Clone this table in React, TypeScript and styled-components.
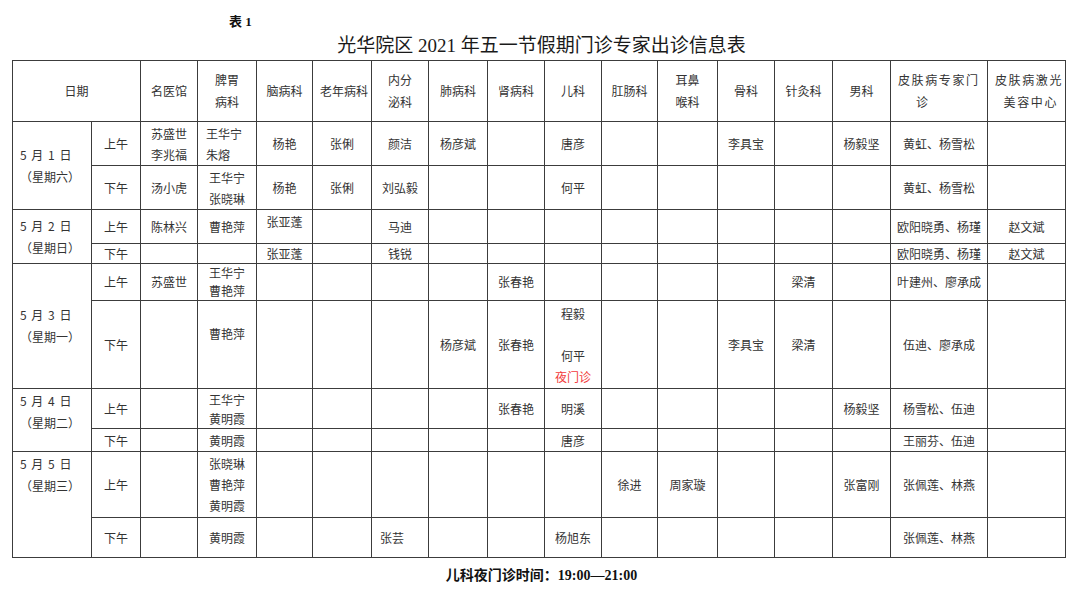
import React from 'react';
import styled, { createGlobalStyle } from 'styled-components';

const GlobalStyle = createGlobalStyle`
  html, body {
    margin: 0;
    padding: 0;
    background: #fff;
  }
  body {
    font-family: "Noto Sans CJK SC", "Noto Sans", sans-serif;
  }
`;

const Page = styled.div`
  width: 1080px;
  height: 589px;
  padding-top: 12px;
  box-sizing: border-box;
  overflow: hidden;
`;

const TableNo = styled.div`
  padding-left: 229px;
  font-family: "Liberation Serif", "Noto Sans CJK SC", serif;
  font-weight: bold;
  font-size: 13px;
  line-height: 20px;
  color: #111;
`;

const Title = styled.h1`
  margin: 0;
  text-align: center;
  font-family: "Liberation Serif", "Noto Sans CJK SC", serif;
  font-weight: normal;
  font-size: 19px;
  line-height: 28px;
  color: #1a1a1a;
  padding-left: 3px;
`;

const Table = styled.table`
  margin-left: 12px;
  width: 1053px;
  border-collapse: collapse;
  table-layout: fixed;
`;

const Row = styled.tr<{ $h: number }>`
  height: ${p => p.$h}px;
`;

const Cell = styled.td<{ $align?: string; $valign?: string; $pad?: number; $lh?: number }>`
  border: 1px solid #3c3c3c;
  padding: ${p => (p.$valign === 'top' ? '1px' : '0')} ${p => p.$pad ?? 4}px 0;
  font-size: 12px;
  line-height: ${p => p.$lh ?? 21}px;
  color: #333;
  white-space: nowrap;
  text-align: ${p => p.$align || 'center'};
  vertical-align: ${p => p.$valign || 'middle'};
`;

const HeadCell = styled.th<{ $align?: string; $spaced?: boolean }>`
  border: 1px solid #3c3c3c;
  padding: 0 7px;
  font-size: 12px;
  font-weight: normal;
  line-height: 22px;
  color: #333;
  white-space: nowrap;
  letter-spacing: ${p => (p.$spaced ? '1.6px' : '0')};
  text-align: ${p => p.$align || 'center'};
  vertical-align: middle;
`;

const DateCell = styled(Cell)`
  padding-left: 7px;
  line-height: 22px;
`;

const DateLine = styled.div`
  word-spacing: 2px;
`;

const Line = styled.div<{ $red?: boolean; $indent?: number }>`
  color: ${p => (p.$red ? '#f23b3b' : 'inherit')};
  padding-left: ${p => p.$indent ?? 0}px;
`;

const Footer = styled.div`
  margin-top: 8px;
  text-align: center;
  font-family: "Liberation Serif", "Noto Sans CJK SC", serif;
  font-weight: bold;
  font-size: 14px;
  line-height: 20px;
  color: #111;
  padding-left: 3px;
`;

type Align = 'left' | 'center' | 'right';
type VAlign = 'top' | 'middle';

interface Spec {
  lines: string[];
  align?: Align;
  valign?: VAlign;
  red?: number;
}

const c = (v: string | string[] = '', o: Partial<Spec> = {}): Spec => ({
  lines: Array.isArray(v) ? v : v ? [v] : [],
  ...o,
});

const widths = [79, 49, 57, 59, 56, 59, 57, 59, 57, 57, 56, 60, 57, 58, 58, 97, 78];

const heads: { lines: string[]; align?: Align; spaced?: boolean; indent?: number }[] = [
  { lines: ['名医馆'] },
  { lines: ['脾胃', '病科'] },
  { lines: ['脑病科'] },
  { lines: ['老年病科'] },
  { lines: ['内分', '泌科'] },
  { lines: ['肺病科'] },
  { lines: ['肾病科'] },
  { lines: ['儿科'] },
  { lines: ['肛肠科'] },
  { lines: ['耳鼻', '喉科'] },
  { lines: ['骨科'] },
  { lines: ['针灸科'] },
  { lines: ['男科'] },
  { lines: ['皮肤病专家门', '诊'], align: 'left', spaced: true, indent: 18 },
  { lines: ['皮肤病激光', '美容中心'], align: 'right', spaced: true },
];

const E = c();

const days: {
  date: string;
  week: string;
  valign: VAlign;
  sessions: { label: string; h: number; lh?: number; cells: Spec[] }[];
}[] = [
  {
    date: '5 月 1 日',
    week: '（星期六）',
    valign: 'middle',
    sessions: [
      {
        label: '上午',
        h: 44,
        cells: [
          c(['苏盛世', '李兆福']), c(['王华宁', '朱熔'], { align: 'left' }), c('杨艳'), c('张俐'), c('颜洁'),
          c('杨彦斌'), E, c('唐彦'), E, E, c('李具宝'), E, c('杨毅坚'), c('黄虹、杨雪松'), E,
        ],
      },
      {
        label: '下午',
        h: 44,
        cells: [
          c('汤小虎'), c(['王华宁', '张晓琳']), c('杨艳'), c('张俐'), c('刘弘毅'),
          E, E, c('何平'), E, E, E, E, E, c('黄虹、杨雪松'), E,
        ],
      },
    ],
  },
  {
    date: '5 月 2 日',
    week: '（星期日）',
    valign: 'middle',
    sessions: [
      {
        label: '上午',
        h: 34,
        cells: [
          c('陈林兴'), c('曹艳萍'), c('张亚蓬', { valign: 'top' }), E, c('马迪'),
          E, E, E, E, E, E, E, E, c('欧阳晓勇、杨瑾'), c('赵文斌'),
        ],
      },
      {
        label: '下午',
        h: 20,
        lh: 19,
        cells: [
          E, E, c('张亚蓬'), E, c('钱锐'),
          E, E, E, E, E, E, E, E, c('欧阳晓勇、杨瑾'), c('赵文斌'),
        ],
      },
    ],
  },
  {
    date: '5 月 3 日',
    week: '（星期一）',
    valign: 'middle',
    sessions: [
      {
        label: '上午',
        h: 37,
        lh: 18,
        cells: [
          c('苏盛世'), c(['王华宁', '曹艳萍']), E, E, E,
          E, c('张春艳'), E, E, E, E, c('梁清'), E, c('叶建州、廖承成'), E,
        ],
      },
      {
        label: '下午',
        h: 88,
        cells: [
          E, c(['', '曹艳萍'], { valign: 'top' }), E, E, E,
          c('杨彦斌'), c('张春艳'), c(['程毅', '', '何平', '夜门诊'], { red: 3 }), E, E,
          c('李具宝'), c('梁清'), E, c('伍迪、廖承成'), E,
        ],
      },
    ],
  },
  {
    date: '5 月 4 日',
    week: '（星期二）',
    valign: 'top',
    sessions: [
      {
        label: '上午',
        h: 40,
        lh: 19,
        cells: [
          E, c(['王华宁', '黄明霞']), E, E, E,
          E, c('张春艳'), c('明溪'), E, E, E, E, c('杨毅坚'), c('杨雪松、伍迪'), E,
        ],
      },
      {
        label: '下午',
        h: 23,
        cells: [
          E, c('黄明霞'), E, E, E,
          E, E, c('唐彦'), E, E, E, E, E, c('王丽芬、伍迪'), E,
        ],
      },
    ],
  },
  {
    date: '5 月 5 日',
    week: '（星期三）',
    valign: 'top',
    sessions: [
      {
        label: '上午',
        h: 66,
        lh: 21,
        cells: [
          E, c(['张晓琳', '曹艳萍', '黄明霞']), E, E, E,
          E, E, E, c('徐进'), c('周家璇'), E, E, c('张富刚'), c('张佩莲、林燕'), E,
        ],
      },
      {
        label: '下午',
        h: 40,
        cells: [
          E, c('黄明霞'), E, E, c('张芸', { align: 'left' }),
          E, E, c('杨旭东'), E, E, E, E, E, c('张佩莲、林燕'), E,
        ],
      },
    ],
  },
];

const Content: React.FC<{ spec: Spec }> = ({ spec }) => (
  <>
    {spec.lines.map((l, i) => (
      <Line key={i} $red={spec.red === i}>
        {l || '\u00a0'}
      </Line>
    ))}
  </>
);

const App: React.FC = () => {
  return (
    <Page>
      <GlobalStyle />
      <TableNo>表 1</TableNo>
      <Title>光华院区 2021 年五一节假期门诊专家出诊信息表</Title>
      <Table>
        <colgroup>
          {widths.map((w, i) => (
            <col key={i} style={{ width: w }} />
          ))}
        </colgroup>
        <tbody>
          <Row $h={61}>
            <HeadCell colSpan={2}>日期</HeadCell>
            {heads.map((h, i) => (
              <HeadCell key={i} $align={h.align} $spaced={h.spaced}>
                {h.lines.map((l, j) => (
                  <Line key={j} $indent={j > 0 ? h.indent : 0}>
                    {l}
                  </Line>
                ))}
              </HeadCell>
            ))}
          </Row>
          {days.map(day =>
            day.sessions.map((s, si) => (
              <Row key={day.date + s.label} $h={s.h}>
                {si === 0 && (
                  <DateCell rowSpan={day.sessions.length} $align="left" $valign={day.valign}>
                    <DateLine>{day.date}</DateLine>
                    <Line>{day.week}</Line>
                  </DateCell>
                )}
                <Cell $lh={s.lh}>{s.label}</Cell>
                {s.cells.map((spec, ci) => (
                  <Cell
                    key={ci}
                    $align={spec.align}
                    $valign={spec.valign}
                    $lh={s.lh}
                    $pad={spec.align === 'left' ? 8 : 4}
                  >
                    <Content spec={spec} />
                  </Cell>
                ))}
              </Row>
            ))
          )}
        </tbody>
      </Table>
      <Footer>儿科夜门诊时间：19:00—21:00</Footer>
    </Page>
  );
};

export default App;
